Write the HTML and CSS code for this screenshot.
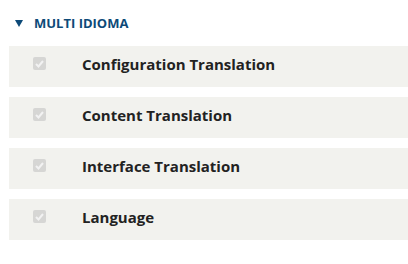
FILE: index.html
```html
<!DOCTYPE html>
<html>
<head>
<meta charset="utf-8">
<link rel="stylesheet" href="styles.css">
</head>
<body>
<div class="panel">
  <div class="summary"><svg class="tri" viewBox="0 0 8 7" width="8" height="7"><polygon points="0,0 8,0 4,7" fill="#0d4a78"/></svg><span class="title">MULTI IDIOMA</span></div>
  <div class="list">
    <div class="row"><span class="cb"><svg viewBox="0 0 13 13" width="13" height="13"><path d="M3 7 L5.5 9.5 L10 4" fill="none" stroke="#f2f2f2" stroke-width="2"/></svg></span><span class="label">Configuration Translation</span></div>
    <div class="row"><span class="cb"><svg viewBox="0 0 13 13" width="13" height="13"><path d="M3 7 L5.5 9.5 L10 4" fill="none" stroke="#f2f2f2" stroke-width="2"/></svg></span><span class="label">Content Translation</span></div>
    <div class="row"><span class="cb"><svg viewBox="0 0 13 13" width="13" height="13"><path d="M3 7 L5.5 9.5 L10 4" fill="none" stroke="#f2f2f2" stroke-width="2"/></svg></span><span class="label">Interface Translation</span></div>
    <div class="row"><span class="cb"><svg viewBox="0 0 13 13" width="13" height="13"><path d="M3 7 L5.5 9.5 L10 4" fill="none" stroke="#f2f2f2" stroke-width="2"/></svg></span><span class="label">Language</span></div>
  </div>
</div>
</body>
</html>
```
FILE: styles.css
```css
html, body { margin: 0; padding: 0; background: #fff; }
body { font-family: "Open Sans", "DejaVu Sans", sans-serif; }
.panel { padding: 13px 0 0 9px; }
.summary { display: flex; align-items: center; height: 20px; padding-left: 6px; color: #0d4a78; }
.tri { margin-right: 11px; margin-top: 1px; }
.title { font-size: 13px; font-weight: 700; line-height: 20px; }
.list { display: flex; flex-direction: column; gap: 10px; margin-top: 13px; }
.row { display: flex; align-items: flex-start; height: 41px; box-sizing: border-box; background: #f2f2ee; }
.cb { width: 13px; height: 13px; margin: 11px 36px 0 24px; background: #d6d6d4; border-radius: 2px; display: flex; }
.label { font-size: 15px; font-weight: 700; line-height: 20px; margin-top: 8px; color: #222; }
```
